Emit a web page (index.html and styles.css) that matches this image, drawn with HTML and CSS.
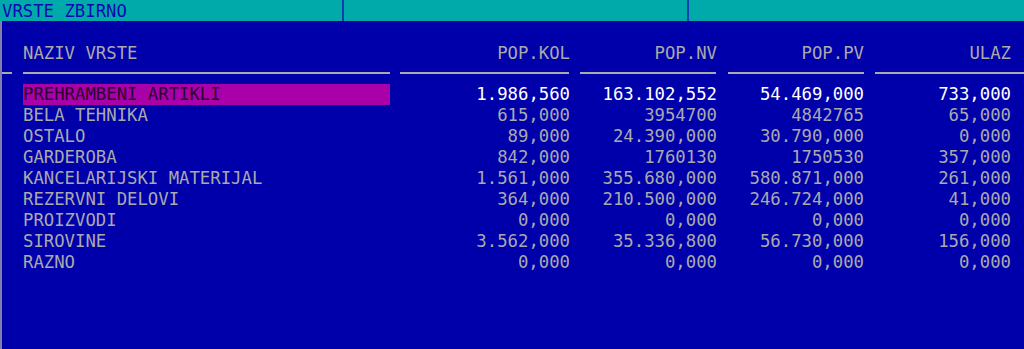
FILE: index.html
```html
<!DOCTYPE html>
<html lang="sr">
<head>
<meta charset="utf-8">
<title>VRSTE ZBIRNO</title>
<link rel="stylesheet" href="styles.css">
</head>
<body>
<div class="screen">
  <div class="titlebar">
    <div class="seg seg-1">VRSTE ZBIRNO</div>
    <div class="seg seg-2"></div>
    <div class="seg seg-3"></div>
  </div>
  <div class="panel">
    <div class="grid header">
      <div class="lead"></div>
      <div class="name">NAZIV VRSTE</div>
      <div class="num">POP.KOL</div>
      <div class="num">POP.NV</div>
      <div class="num">POP.PV</div>
      <div class="num">ULAZ</div>
      <div class="tail"></div>
    </div>
    <div class="grid rule">
      <div class="lead"><span class="line short"></span></div>
      <div class="name"><span class="line"></span></div>
      <div class="num"><span class="line"></span></div>
      <div class="num"><span class="line"></span></div>
      <div class="num"><span class="line wide"></span></div>
      <div class="num last"><span class="line end"></span></div>
    </div>
    <div class="rows">
      <div class="grid row selected">
        <div class="lead"></div>
        <div class="name">PREHRAMBENI ARTIKLI</div>
        <div class="num">1.986,560</div>
        <div class="num">163.102,552</div>
        <div class="num">54.469,000</div>
        <div class="num">733,000</div>
        <div class="tail"></div>
      </div>
      <div class="grid row">
        <div class="lead"></div>
        <div class="name">BELA TEHNIKA</div>
        <div class="num">615,000</div>
        <div class="num">3954700</div>
        <div class="num">4842765</div>
        <div class="num">65,000</div>
        <div class="tail"></div>
      </div>
      <div class="grid row">
        <div class="lead"></div>
        <div class="name">OSTALO</div>
        <div class="num">89,000</div>
        <div class="num">24.390,000</div>
        <div class="num">30.790,000</div>
        <div class="num">0,000</div>
        <div class="tail"></div>
      </div>
      <div class="grid row">
        <div class="lead"></div>
        <div class="name">GARDEROBA</div>
        <div class="num">842,000</div>
        <div class="num">1760130</div>
        <div class="num">1750530</div>
        <div class="num">357,000</div>
        <div class="tail"></div>
      </div>
      <div class="grid row">
        <div class="lead"></div>
        <div class="name">KANCELARIJSKI MATERIJAL</div>
        <div class="num">1.561,000</div>
        <div class="num">355.680,000</div>
        <div class="num">580.871,000</div>
        <div class="num">261,000</div>
        <div class="tail"></div>
      </div>
      <div class="grid row">
        <div class="lead"></div>
        <div class="name">REZERVNI DELOVI</div>
        <div class="num">364,000</div>
        <div class="num">210.500,000</div>
        <div class="num">246.724,000</div>
        <div class="num">41,000</div>
        <div class="tail"></div>
      </div>
      <div class="grid row">
        <div class="lead"></div>
        <div class="name">PROIZVODI</div>
        <div class="num">0,000</div>
        <div class="num">0,000</div>
        <div class="num">0,000</div>
        <div class="num">0,000</div>
        <div class="tail"></div>
      </div>
      <div class="grid row">
        <div class="lead"></div>
        <div class="name">SIROVINE</div>
        <div class="num">3.562,000</div>
        <div class="num">35.336,800</div>
        <div class="num">56.730,000</div>
        <div class="num">156,000</div>
        <div class="tail"></div>
      </div>
      <div class="grid row">
        <div class="lead"></div>
        <div class="name">RAZNO</div>
        <div class="num">0,000</div>
        <div class="num">0,000</div>
        <div class="num">0,000</div>
        <div class="num">0,000</div>
        <div class="tail"></div>
      </div>
    </div>
  </div>
</div>
</body>
</html>
```

FILE: styles.css
```css
html, body {
  margin: 0;
  padding: 0;
  background: #0000aa;
  overflow: hidden;
}

.screen {
  width: 1024px;
  height: 349px;
  display: flex;
  flex-direction: column;
  font-family: "DejaVu Sans Mono", "Liberation Mono", monospace;
  font-size: 17.3px;
  color: #aaaaaa;
}

.titlebar {
  display: flex;
  height: 21px;
  background: #00aaaa;
  flex: none;
}

.seg {
  height: 21px;
  box-sizing: border-box;
  padding-top: 2px;
  line-height: 19px;
  color: #0a0ab0;
  white-space: pre;
}

.seg-1 {
  width: 342px;
  padding-left: 2px;
  box-sizing: border-box;
}

.seg-2 {
  width: 345px;
  border-left: 2px solid #1240ac;
}

.seg-3 {
  flex: 1;
  border-left: 2px solid #1240ac;
}

.panel {
  flex: 1;
  border-left: 2px solid #8080a8;
  box-sizing: border-box;
  padding-top: 22px;
}

.grid {
  display: grid;
  grid-template-columns: 21px 367px 180px 147px 147px 147px 13px;
  line-height: 21px;
  white-space: pre;
}

.num {
  text-align: right;
}

.rule {
  margin-top: 8px;
  height: 2px;
  line-height: 0;
}

.rule .line {
  display: block;
  height: 2px;
  background: #aaaaaa;
}

.rule .lead .line.short {
  width: 10px;
  margin-left: 0;
}

.rule .num .line {
  margin-left: 10px;
  margin-right: 1px;
}

.rule .num .line.wide {
  margin-left: 11px;
  margin-right: 0;
}

.rule .num.last {
  grid-column: 6 / span 2;
}

.rule .num.last .line.end {
  margin-left: 11px;
  margin-right: 0;
}

.rows {
  margin-top: 10px;
}

.row .name {
  height: 21px;
}

.row.selected .name {
  background: #aa00aa;
  color: #2a0030;
}

.row.selected .num {
  color: #ffffff;
}
```
